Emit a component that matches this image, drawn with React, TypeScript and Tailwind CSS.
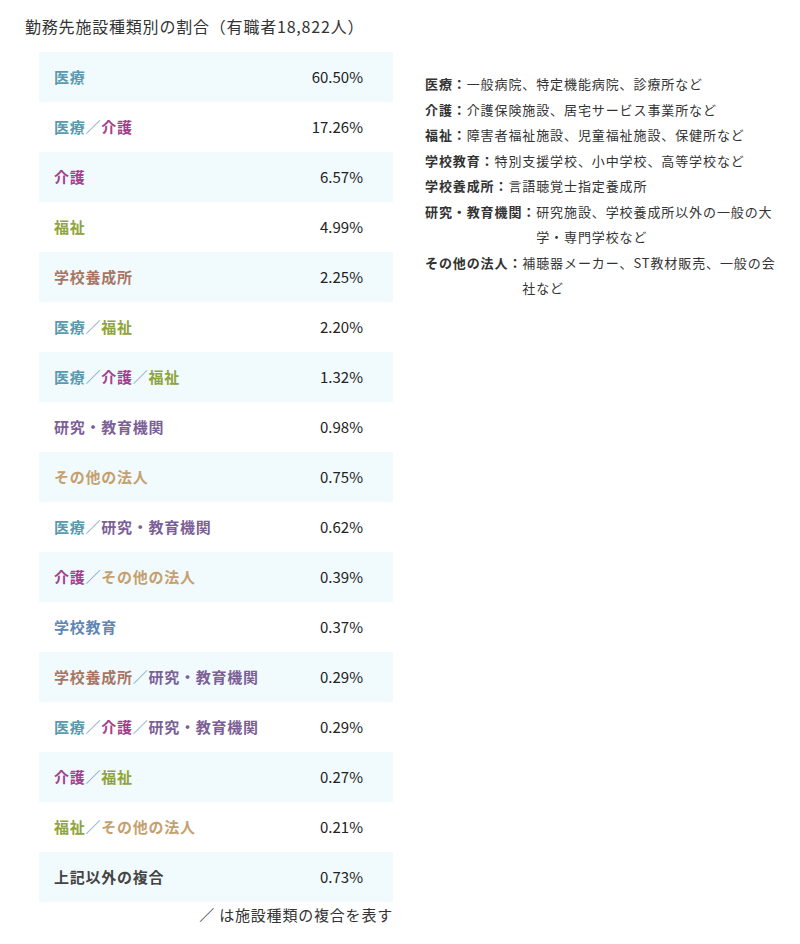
const C = {
  iryo: "text-[#5a9ab0]",
  kaigo: "text-[#a3418f]",
  fukushi: "text-[#8fa43c]",
  yosei: "text-[#a87564]",
  kenkyu: "text-[#7c5f97]",
  sonota: "text-[#c5a06f]",
  gakko: "text-[#5f87b5]",
  other: "text-[#444444]",
};

type Part = { t: string; c: string };

const rows: { parts: Part[]; pct: string }[] = [
  { parts: [{ t: "医療", c: C.iryo }], pct: "60.50%" },
  { parts: [{ t: "医療", c: C.iryo }, { t: "介護", c: C.kaigo }], pct: "17.26%" },
  { parts: [{ t: "介護", c: C.kaigo }], pct: "6.57%" },
  { parts: [{ t: "福祉", c: C.fukushi }], pct: "4.99%" },
  { parts: [{ t: "学校養成所", c: C.yosei }], pct: "2.25%" },
  { parts: [{ t: "医療", c: C.iryo }, { t: "福祉", c: C.fukushi }], pct: "2.20%" },
  {
    parts: [
      { t: "医療", c: C.iryo },
      { t: "介護", c: C.kaigo },
      { t: "福祉", c: C.fukushi },
    ],
    pct: "1.32%",
  },
  { parts: [{ t: "研究・教育機関", c: C.kenkyu }], pct: "0.98%" },
  { parts: [{ t: "その他の法人", c: C.sonota }], pct: "0.75%" },
  { parts: [{ t: "医療", c: C.iryo }, { t: "研究・教育機関", c: C.kenkyu }], pct: "0.62%" },
  { parts: [{ t: "介護", c: C.kaigo }, { t: "その他の法人", c: C.sonota }], pct: "0.39%" },
  { parts: [{ t: "学校教育", c: C.gakko }], pct: "0.37%" },
  { parts: [{ t: "学校養成所", c: C.yosei }, { t: "研究・教育機関", c: C.kenkyu }], pct: "0.29%" },
  {
    parts: [
      { t: "医療", c: C.iryo },
      { t: "介護", c: C.kaigo },
      { t: "研究・教育機関", c: C.kenkyu },
    ],
    pct: "0.29%",
  },
  { parts: [{ t: "介護", c: C.kaigo }, { t: "福祉", c: C.fukushi }], pct: "0.27%" },
  { parts: [{ t: "福祉", c: C.fukushi }, { t: "その他の法人", c: C.sonota }], pct: "0.21%" },
  { parts: [{ t: "上記以外の複合", c: C.other }], pct: "0.73%" },
];

const notes = [
  { label: "医療：", text: "一般病院、特定機能病院、診療所など" },
  { label: "介護：", text: "介護保険施設、居宅サービス事業所など" },
  { label: "福祉：", text: "障害者福祉施設、児童福祉施設、保健所など" },
  { label: "学校教育：", text: "特別支援学校、小中学校、高等学校など" },
  { label: "学校養成所：", text: "言語聴覚士指定養成所" },
  { label: "研究・教育機関：", text: "研究施設、学校養成所以外の一般の大学・専門学校など" },
  { label: "その他の法人：", text: "補聴器メーカー、ST教材販売、一般の会社など" },
];

const App = () => {
  return (
    <div className="w-[800px] min-h-[944px] bg-white pl-[25px] pt-[14px] text-[#333333] font-['Noto_Sans_CJK_JP','Noto_Sans',sans-serif]">
      <h2 className="text-[16px] leading-[24px] font-normal tracking-[0.8px]">
        勤務先施設種類別の割合（有職者18,822人）
      </h2>

      <div className="flex mt-[14px] ml-[14px]">
        <div className="w-[354px] shrink-0">
          {rows.map((row, i) => (
            <div
              key={i}
              className={`flex items-center justify-between h-[50px] pl-[15px] pr-[30px] ${
                i % 2 === 0 ? "bg-[#f1fbfd]" : "bg-white"
              }`}
            >
              <div className="text-[15px] font-bold tracking-[0.75px]">
                {row.parts.map((p, j) => (
                  <span key={j}>
                    {j > 0 && <span className="text-[#6fa3b8] font-normal">／</span>}
                    <span className={p.c}>{p.t}</span>
                  </span>
                ))}
              </div>
              <div className="text-[15px] text-[#222222]">{row.pct}</div>
            </div>
          ))}
          <p className="text-right text-[15px] leading-[24px] mt-[1px] tracking-[0.8px] text-[#333333]">
            ／ は施設種類の複合を表す
          </p>
        </div>

        <div className="ml-[32px] mt-[19px] w-[358px] text-[13px] leading-[25.5px] tracking-[0.9px] text-[#333333]">
          {notes.map((n, i) => (
            <div key={i} className="flex">
              <span className="font-bold shrink-0">{n.label}</span>
              <span>{n.text}</span>
            </div>
          ))}
        </div>
      </div>
    </div>
  );
};

export default App;
